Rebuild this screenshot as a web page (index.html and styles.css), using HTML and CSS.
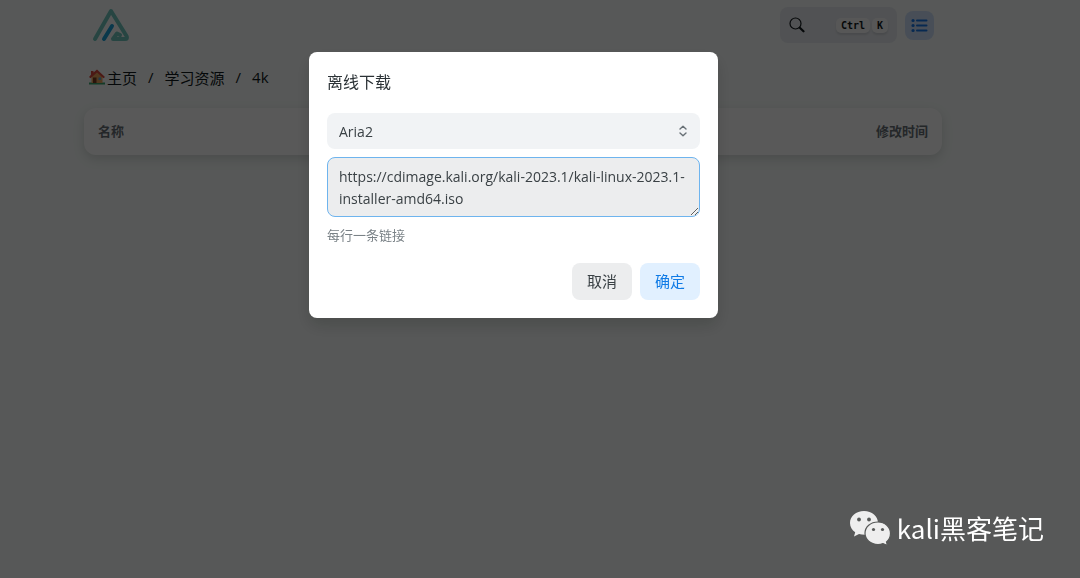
FILE: index.html
```html
<!DOCTYPE html>
<html lang="zh-CN">
<head>
    <meta charset="UTF-8">
    <meta name="viewport" content="width=device-width, initial-scale=1.0">
    <title>4k</title>
    <link rel="stylesheet" href="styles.css">
</head>
<body>
    <div class="page">
        <header class="header">
            <a class="logo" href="#" aria-label="主页">
                <svg width="38" height="34" viewBox="0 0 38 34" fill="none" stroke-width="4" stroke-linecap="round" stroke-linejoin="round">
                    <path class="logo-frame" d="M3 31 L19 3 L34.500 28 Q36 31 33 31 H21 L25 25.500 L28 27"/>
                    <path class="logo-slash" d="M12 31 L20 18"/>
                </svg>
            </a>
            <div class="tools">
                <button class="search" type="button" aria-label="搜索">
                    <svg width="16" height="16" viewBox="0 0 16 16" fill="none" stroke="currentColor" stroke-linecap="round">
                        <circle cx="6.5" cy="6.5" r="5.5" stroke-width="1.2"/>
                        <path d="M10.8 10.8 L14.5 14.3" stroke-width="2.2"/>
                    </svg>
                    <span class="keys"><kbd>Ctrl</kbd><kbd>K</kbd></span>
                </button>
                <button class="layout" type="button" aria-label="列表">
                    <svg width="17" height="15" viewBox="0 0 17 15" fill="none" stroke="currentColor" stroke-linecap="round">
                        <path d="M6 2.5 H15.5 M6 7.5 H15.5 M6 12.5 H15.5" stroke-width="2"/>
                        <path d="M2 2.5 H2.1 M2 7.5 H2.1 M2 12.5 H2.1" stroke-width="3.2"/>
                    </svg>
                </button>
            </div>
        </header>
        <nav class="breadcrumb">
            <a href="#">
                <svg width="16" height="16" viewBox="0 0 16 16">
                    <path fill="#3aa76d" d="M0 13.5 H16 V15.5 H0 Z"/>
                    <path fill="#e8a35c" d="M2.5 7 L8 2.5 L13.5 7 V14 H2.5 Z"/>
                    <path fill="#d8483e" d="M0 8 L2 5.7 V2 H4.5 V3.6 L8 .5 L16 8 L14.5 9.2 L8 3.4 L1.5 9.2 Z"/>
                    <path fill="#7a3b20" d="M4 8.5 H7.5 V14 H4 Z"/>
                    <path fill="#5aa5d8" d="M9.5 8.5 H12 V11 H9.5 Z"/>
                </svg>主页</a>
            <span>/</span>
            <a href="#">学习资源</a>
            <span>/</span>
            <a href="#">4k</a>
        </nav>
        <table class="files">
            <thead>
                <tr><th>名称</th><th class="time">修改时间</th></tr>
            </thead>
        </table>
    </div>

    <div class="overlay">
        <form class="modal" role="dialog" aria-labelledby="modal-title">
            <h1 id="modal-title">离线下载</h1>
            <div class="select-box">
                <select aria-label="下载工具">
                    <option>Aria2</option>
                </select>
                <svg class="select-icon" width="10" height="14" viewBox="0 0 10 14" fill="none" stroke="currentColor" stroke-width="1.4" stroke-linecap="round" stroke-linejoin="round">
                    <path d="M2 5 L5 2.200 L8 5 M2 9 L5 11.800 L8 9"/>
                </svg>
            </div>
            <textarea id="urls" aria-describedby="hint" aria-label="链接" spellcheck="false">https://cdimage.kali.org/kali-2023.1/kali-linux-2023.1-installer-amd64.iso</textarea>
            <label class="hint" id="hint" for="urls">每行一条链接</label>
            <div class="actions">
                <button class="cancel" type="button">取消</button>
                <button class="confirm" type="button">确定</button>
            </div>
        </form>
    </div>

    <div class="watermark">
        <svg width="42" height="36" viewBox="0 0 42 36">
            <path fill="#eee" d="M15 1 C7 1 1 6.3 1 13 C1 17 3 20 6.2 22.2 L5 26.5 L10 24 Q12.5 24.8 16 24.8 C23 24.5 29 19.5 29 13 C29 6.3 23 1 15 1 Z"/>
            <path fill="#eee" stroke="#575958" stroke-width="1.2" d="M29 12 C21.5 12 16 17 16 23.3 C16 29.5 21.5 34.5 29 34.5 Q31.5 34.5 34 33.6 L38.5 35.6 L37.5 32 C40 30 41.5 27 41.5 23.3 C41.5 17 36 12 29 12 Z"/>
            <g fill="#575958">
                <circle cx="10" cy="9.5" r="1.9"/>
                <circle cx="20" cy="9.5" r="1.9"/>
                <circle cx="24.5" cy="19.5" r="1.6"/>
                <circle cx="33.5" cy="19.5" r="1.6"/>
            </g>
        </svg>
        <span>kali黑客笔记</span>
    </div>
</body>
</html>
```

FILE: styles.css
```css
* {
    box-sizing: border-box;
}
body {
    margin: 0;
    min-height: 100vh;
    padding-right: 54px;
    background-color: #f8fdfb;
    color: #11181c;
    font-family: "Open Sans", "Noto Sans CJK SC", sans-serif;
    font-size: 14px;
}
button, select, textarea {
    border: none;
    font: inherit;
    color: inherit;
}
a {
    color: inherit;
    text-decoration: none;
}
.page {
    max-width: 874px;
    margin: 0 auto;
    padding: 0 8px;
}
.header {
    display: flex;
    justify-content: space-between;
    align-items: center;
    height: 50px;
    padding: 0 8px;
}
.logo svg {
    display: block;
}
.logo-frame {
    stroke: #70c6be;
}
.logo-slash {
    stroke: #1ba0d8;
}
.tools {
    display: flex;
    align-items: center;
    gap: 8px;
}
.search {
    display: flex;
    align-items: center;
    justify-content: space-between;
    width: 117px;
    height: 36px;
    padding: 0 9px;
    border-radius: 8px;
    background-color: #e8ebf0;
}
.keys {
    display: flex;
    gap: 2px;
}
kbd {
    padding: 0 5px;
    border-radius: 5px;
    background-color: #f8f9fa;
    box-shadow: 0 2px 2px #d0d4d8;
    font: bold 10px/15px "DejaVu Sans Mono", monospace;
}
.layout {
    display: flex;
    align-items: center;
    justify-content: center;
    width: 29px;
    height: 29px;
    padding: 0;
    border-radius: 8px;
    background-color: #cfe0f8;
    color: #1677e8;
}
.breadcrumb {
    display: flex;
    align-items: center;
    gap: 11px;
    height: 34px;
    margin-top: 10px;
    padding-left: 5px;
    font-size: 15px;
}
.breadcrumb a {
    display: flex;
    align-items: center;
    gap: 2px;
}
.files {
    width: 100%;
    margin-top: 14px;
    border-radius: 12px;
    border-spacing: 0;
    background-color: #fff;
    box-shadow: 0 4px 12px rgba(0, 0, 0, 0.14);
    font-size: 13px;
}
.files th {
    height: 47px;
    padding: 0 14px 2px;
    text-align: left;
    color: #687076;
}
.files .time {
    text-align: right;
}
.overlay {
    position: fixed;
    inset: 0;
    display: flex;
    align-items: flex-start;
    justify-content: center;
    padding: 52px 53px 0 0;
    background-color: rgba(0, 0, 0, 0.65);
}
.modal {
    display: flex;
    flex-direction: column;
    width: 100%;
    max-width: 409px;
    padding: 18px;
    border-radius: 8px;
    background-color: #fff;
    box-shadow: 0 8px 16px rgba(0, 0, 0, 0.15);
    color: #3a4145;
}
.modal h1 {
    margin: 0 0 19px;
    font-size: 16px;
    font-weight: normal;
    line-height: 24px;
    color: #2b3236;
}
.select-box {
    display: grid;
    align-items: center;
    margin-bottom: 8px;
}
.select-box > * {
    grid-area: 1 / 1;
}
.select-box select {
    appearance: none;
    width: 100%;
    height: 36px;
    padding: 0 12px;
    border-radius: 8px;
    background-color: #f1f3f5;
}
.select-icon {
    justify-self: end;
    margin-right: 12px;
    color: #687076;
    pointer-events: none;
}
.modal textarea {
    height: 60px;
    padding: 8px 11px;
    border: 1px solid #6eb4ee;
    border-radius: 8px;
    background-color: #ecedee;
    line-height: 22px;
    overflow: hidden;
    resize: vertical;
    outline: none;
}
.hint {
    margin-top: 7px;
    font-size: 13px;
    line-height: 22px;
    color: #7a8287;
}
.actions {
    display: flex;
    justify-content: flex-end;
    gap: 8px;
    margin-top: 17px;
}
.actions button {
    width: 60px;
    height: 37px;
    padding: 0 0 2px;
    border-radius: 8px;
    font-size: 15px;
}
.actions .cancel {
    background-color: #ecedee;
}
.actions .confirm {
    background-color: #e1f0ff;
    color: #0f7be6;
}
.watermark {
    position: fixed;
    right: 36px;
    bottom: 32px;
    display: flex;
    align-items: center;
    gap: 6px;
    color: #fff;
    font-family: "Noto Sans CJK SC", sans-serif;
    font-size: 26px;
    line-height: 36px;
}
```
